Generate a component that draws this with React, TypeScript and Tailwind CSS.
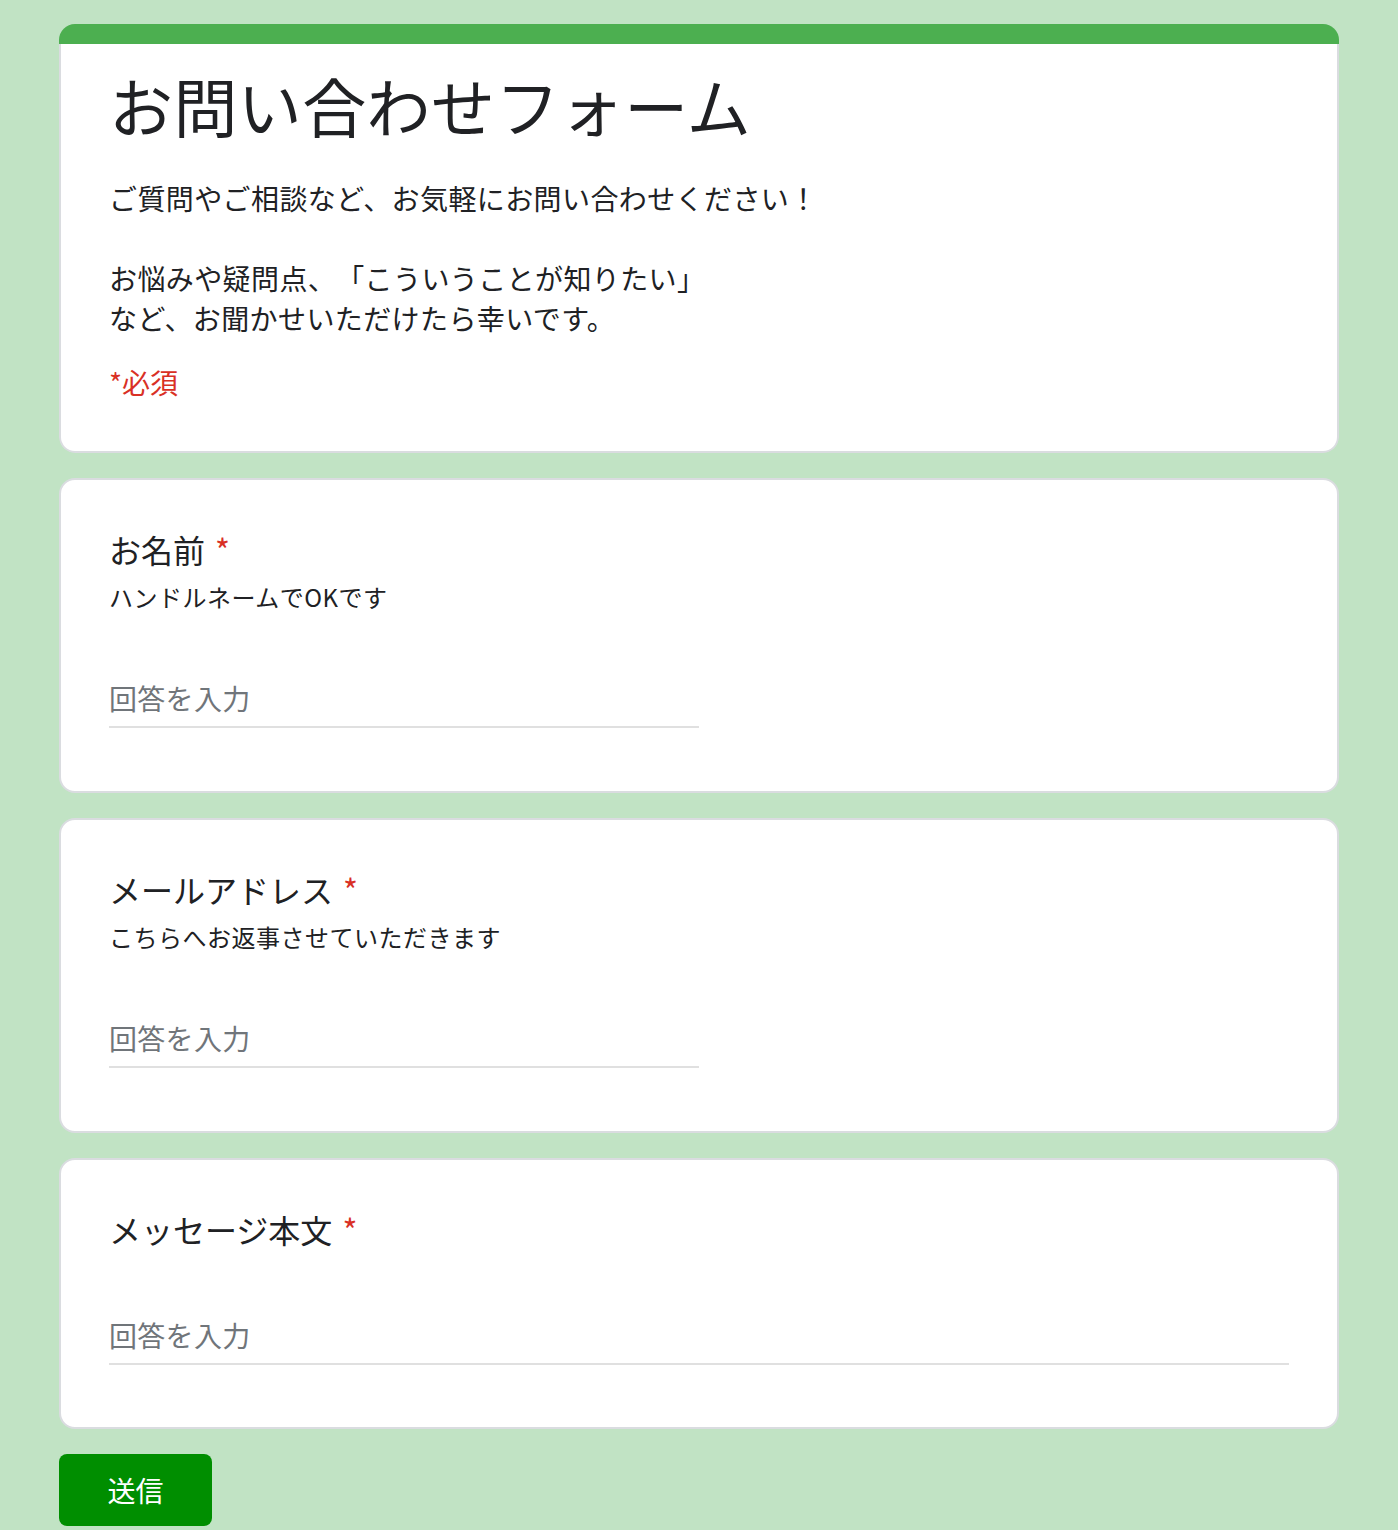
import React from "react";

const font = { fontFamily: '"Noto Sans CJK JP", "Noto Sans", sans-serif' };

function Question({ title, helper, full }: { title: string; helper?: string; full?: boolean }) {
  return (
    <div
      className={
        "bg-white border-2 border-[#dadce0] rounded-[16px] px-[48px] pt-[45px] " +
        (full ? "pb-[62px]" : "pb-[63px]")
      }
    >
      <div className="text-[32px] leading-[48px] text-[#202124]">
        {title}
        <span className="text-[#d93025] ml-[10px]">*</span>
      </div>
      {helper ? (
        <div className="mt-[4px] text-[24px] leading-[40px] text-[#202124] tracking-[0.5px]">{helper}</div>
      ) : null}
      <div className={helper ? "mt-[61px]" : "mt-[62px]"}>
        <div className={(full ? "w-full" : "w-1/2") + " border-b-2 border-[#e0e0e0] pb-[8px]"}>
          <div className="text-[28px] leading-[40px] text-[#70757a] tracking-[0.3px]">回答を入力</div>
        </div>
      </div>
    </div>
  );
}

export default function App() {
  return (
    <div className="min-h-screen bg-[#c1e3c4] [text-spacing-trim:space-all]" style={font}>
      <div className="w-[1280px] ml-[59px] pt-[24px] pb-[4px] flex flex-col">
        <div className="rounded-[16px] overflow-hidden">
          <div className="h-[20px] bg-[#4caf50]" />
          <div className="bg-white border-2 border-t-0 border-[#dadce0] rounded-b-[16px] px-[48px] pt-[20px] pb-[49px]">
            <h1 className="text-[64px] leading-[80px] text-[#202124] font-normal tracking-[0.4px]">お問い合わせフォーム</h1>
            <div className="mt-[34px] text-[28px] leading-[40px] text-[#202124] tracking-[0.4px]">
              <div>ご質問やご相談など、お気軽にお問い合わせください！</div>
              <div>&nbsp;</div>
              <div>お悩みや疑問点、「こういうことが知りたい」</div>
              <div>など、お聞かせいただけたら幸いです。</div>
            </div>
            <div className="mt-[24px] text-[28px] leading-[40px] text-[#d93025]">*必須</div>
          </div>
        </div>
        <div className="mt-[25px]">
          <Question title="お名前" helper="ハンドルネームでOKです" />
        </div>
        <div className="mt-[25px]">
          <Question title="メールアドレス" helper="こちらへお返事させていただきます" />
        </div>
        <div className="mt-[25px]">
          <Question title="メッセージ本文" full />
        </div>
        <div className="mt-[25px]">
          <button className="w-[153px] h-[72px] rounded-[8px] bg-[#008e00] text-white text-[28px] leading-[40px]">
            送信
          </button>
        </div>
      </div>
    </div>
  );
}
